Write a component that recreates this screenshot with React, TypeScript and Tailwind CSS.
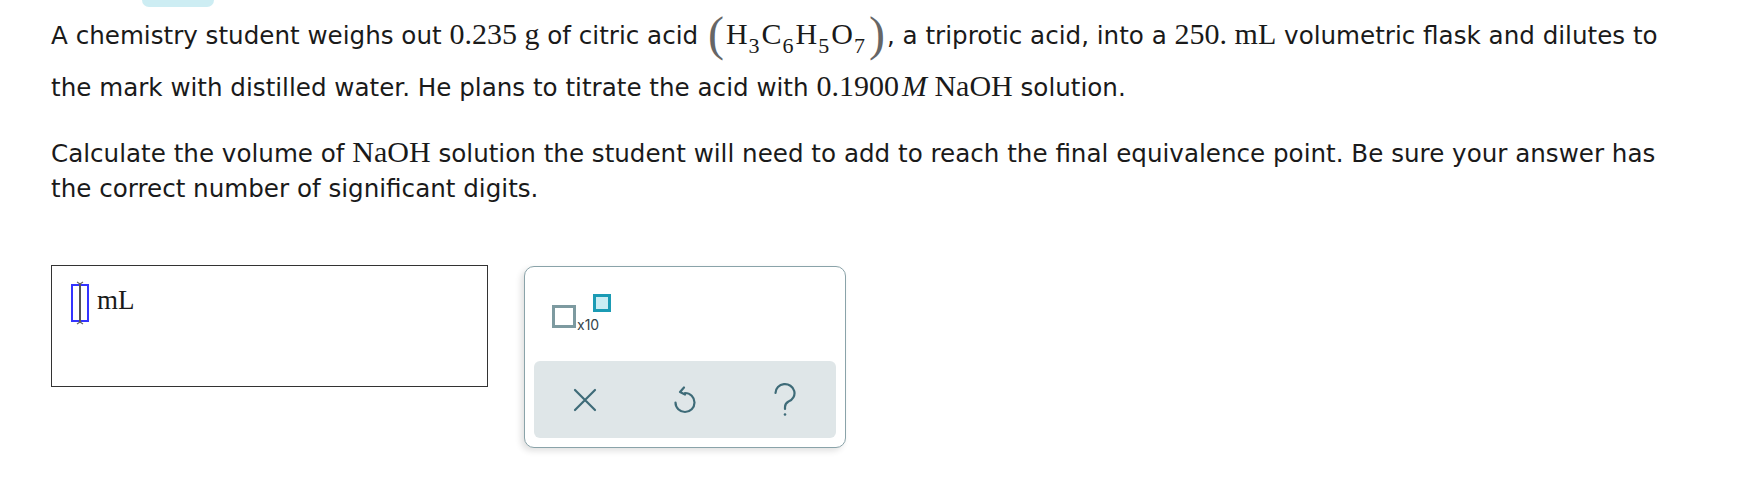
import React from "react"

const serif = { fontFamily: '"Liberation Serif", "Times New Roman", serif' }

function M({ children }: { children: React.ReactNode }) {
  return (
    <span className="text-[30px] leading-none" style={serif}>
      {children}
    </span>
  )
}

function Sub({ children }: { children: React.ReactNode }) {
  return <span className="text-[22px] leading-none align-[-9px] ml-[1px] mr-[2px]">{children}</span>
}

function Paren({ c }: { c: string }) {
  return <span className="text-[48px] leading-none text-[#666] align-[-6px] mx-[2px]">{c}</span>
}

function Formula() {
  return (
    <span className="text-[30px] leading-none whitespace-nowrap" style={serif}>
      <Paren c="(" />
      H<Sub>3</Sub>C<Sub>6</Sub>H<Sub>5</Sub>O<Sub>7</Sub>
      <Paren c=")" />
    </span>
  )
}

function Cursor() {
  return (
    <svg width="20" height="46" viewBox="0 0 20 46" className="shrink-0">
      <rect x="2" y="5" width="16" height="36" fill="none" stroke="#3434ff" strokeWidth="2" />
      <line x1="10" y1="3" x2="10" y2="43" stroke="#555" strokeWidth="2" />
      <path d="M7 2 L10 4 L13 2 M7 44 L10 42 L13 44" fill="none" stroke="#666" strokeWidth="1.2" />
    </svg>
  )
}

function XIcon() {
  return (
    <svg width="24" height="24" viewBox="0 0 24 24" fill="none" stroke="#3e6b78" strokeWidth="2.2" strokeLinecap="round">
      <path d="M2 2 L22 22 M22 2 L2 22" />
    </svg>
  )
}

function UndoIcon() {
  return (
    <svg width="26" height="30" viewBox="0 0 26 30" fill="none" stroke="#3e6b78" strokeWidth="2.2" strokeLinecap="round" strokeLinejoin="round">
      <path d="M13 8 A9.5 9.5 0 1 1 3.5 17.5" />
      <path d="M12 2.5 L8 7 L13 9.5" />
    </svg>
  )
}

function HelpIcon() {
  return (
    <svg width="24" height="34" viewBox="0 0 24 34" fill="none" stroke="#3e6b78" strokeWidth="2.2" strokeLinecap="round">
      <path d="M2.5 10 A9.5 9 0 1 1 15.5 18.5 C13 19.8 12 21.5 12 24 V26" />
      <circle cx="12" cy="31.5" r="1.3" fill="#3e6b78" stroke="none" />
    </svg>
  )
}

export default function App() {
  return (
    <div className="bg-white text-[#1a1a1a] pl-[51px] pb-10" style={{ fontFamily: '"DejaVu Sans", Verdana, sans-serif' }}>
      <div className="ml-[91px] w-[72px] h-[7px] rounded-b-[9px] bg-[#cdedf3]" />

      <p className="w-[1630px] mt-[3px] text-[24.6px] leading-[52px]">
        A chemistry student weighs out <M>0.235 g</M> of citric acid <Formula />, a triprotic acid, into a{" "}
        <M>250. mL</M> volumetric flask and dilutes to the mark with distilled water. He plans to titrate the acid
        with{" "}
        <M>
          0.1900<i className="ml-[3px]">M</i> NaOH
        </M>{" "}
        solution.
      </p>

      <p className="w-[1630px] mt-[22px] text-[24.6px] leading-[35px]">
        Calculate the volume of <M>NaOH</M> solution the student will need to add to reach the final equivalence point.
        Be sure your answer has the correct number of significant digits.
      </p>

      <div className="mt-[59px] flex items-start gap-[36px]">
        <div className="w-[437px] h-[122px] border border-[#333] pl-[18px] pt-[14px] flex items-start gap-[7px]">
          <Cursor />
          <span className="text-[27px] leading-none mt-[7px]" style={serif}>
            mL
          </span>
        </div>

        <div className="w-[322px] h-[182px] mt-[1px] rounded-[10px] border border-[#8aa3a9] bg-white p-[9px] shadow-[-3px_3px_6px_rgba(0,0,0,0.12)] flex flex-col">
          <div className="h-[85px] pl-[18px] pt-[18px] flex items-start">
            <div className="mt-[11px] w-[24px] h-[23px] border-[3px] border-[#7d9aa0]" />
            <span className="mt-[20px] ml-[1px] text-[14px] text-[#34444a]" style={{ fontFamily: "Inter, sans-serif" }}>
              x10
            </span>
            <div className="-ml-[6px] w-[18px] h-[18px] border-[3px] border-[#1b9bb4] bg-[#cbedf3]" />
          </div>
          <div className="flex-1 rounded-[6px] bg-[#dfe6e8] flex items-center justify-center">
            <div className="w-[100px] flex justify-center">
              <XIcon />
            </div>
            <div className="w-[100px] flex justify-center">
              <UndoIcon />
            </div>
            <div className="w-[100px] flex justify-center">
              <HelpIcon />
            </div>
          </div>
        </div>
      </div>
    </div>
  )
}
